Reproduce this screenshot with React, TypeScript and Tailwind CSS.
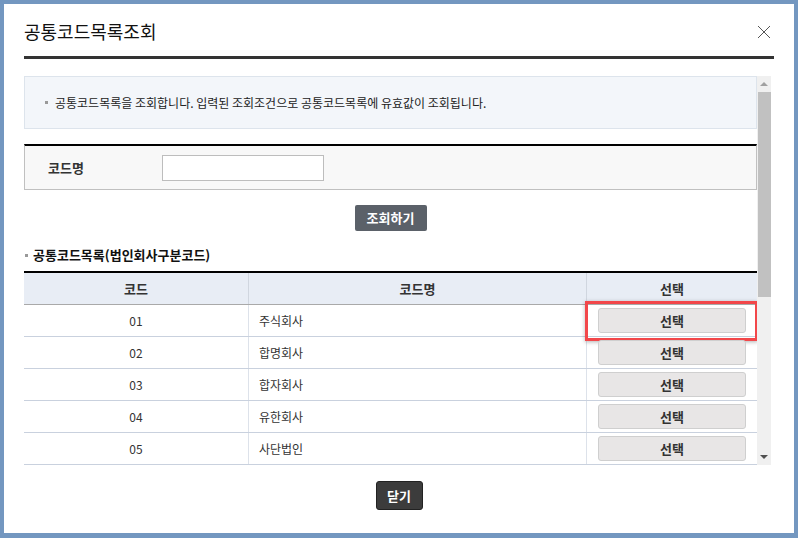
import React from "react";

const rows = [
  ["01", "주식회사"],
  ["02", "합명회사"],
  ["03", "합자회사"],
  ["04", "유한회사"],
  ["05", "사단법인"],
];

export default function App() {
  return (
    <div className="w-[798px] h-[538px] bg-[#7397c0] pt-[4px] pl-[4px] pr-[4px] pb-[5px]" style={{ fontFamily: '"Noto Sans CJK KR", "Noto Sans", sans-serif' }}>
      <div className="w-full h-full bg-white relative flex flex-col">
        <div className="flex items-center h-[55px] mx-[20px] border-b-[3px] border-[#333]">
          <div className="text-[18px] text-[#111] pt-[2px]">공통코드목록조회</div>
        </div>
        <div className="absolute right-[23px] top-[21px] text-[#555]">
          <svg width="14" height="14" viewBox="0 0 14 14"><path d="M1 1L13 13M13 1L1 13" stroke="#555" strokeWidth="1" /></svg>
        </div>
        <div className="mt-[17px] ml-[20px] flex h-[389px] w-[747px]">
          <div className="w-[733px] h-full overflow-hidden">
            <div className="h-[53px] bg-[#f3f6fa] border border-[#dde4ec] flex items-center pl-[20px] text-[12px] text-[#222]">
              <span className="w-[3px] h-[3px] bg-[#999] mr-[7px]" />
              공통코드목록을 조회합니다. 입력된 조회조건으로 공통코드목록에 유효값이 조회됩니다.
            </div>
            <div className="mt-[15px] h-[46px] bg-[#f8f8f8] border-t-2 border-t-black border-x border-b border-[#c0c0c0] flex items-center">
              <div className="w-[137px] pl-[23px] text-[13px] font-bold text-[#333]">코드명</div>
              <div className="w-[162px] h-[26px] bg-white border border-[#bdbdbd]" />
            </div>
            <div className="flex justify-center mt-[15px]">
              <div className="w-[72px] h-[26px] bg-[#5b6169] rounded-[2px] text-white text-[13px] font-bold flex items-center justify-center">조회하기</div>
            </div>
            <div className="mt-[14px] flex items-center h-[20px] text-[13px] font-bold text-[#111]">
              <span className="w-[3px] h-[3px] bg-[#999] mr-[5px] ml-[1px]" />
              공통코드목록(법인회사구분코드)
            </div>
            <div className="mt-[6px] border-t-2 border-black">
              <div className="flex h-[32px] bg-[#e8edf5] border-b border-[#a9a9a9] text-[13px] font-bold text-[#333]">
                <div className="w-[225px] flex items-center justify-center border-r border-[#d0d6df]">코드</div>
                <div className="w-[338px] flex items-center justify-center border-r border-[#d0d6df]">코드명</div>
                <div className="flex-1 flex items-center justify-center">선택</div>
              </div>
              {rows.map(([c, n], i) => (
                <div key={c} className="flex h-[32px] border-b border-[#c9d1de] text-[12px] text-[#333]">
                  <div className="w-[225px] flex items-center justify-center border-r border-[#dde2ea]">{c}</div>
                  <div className="w-[338px] flex items-center pl-[10px] border-r border-[#dde2ea]">{n}</div>
                  <div className="flex-1 flex items-center justify-center relative">
                    <div className="w-[148px] h-[25px] bg-[#e8e6e6] border border-[#cfcfcf] rounded-[3px] flex items-center justify-center text-[13px] font-bold text-[#333]">선택</div>
                    {i === 0 && <div className="absolute left-[-2px] right-[-1px] top-[-4px] bottom-[-5px] border-[3px] border-[#f2474a] shadow-[0_1px_4px_rgba(0,0,0,0.3)]" />}
                  </div>
                </div>
              ))}
              <div className="flex h-[32px]">
                <div className="w-[225px] border-r border-[#dde2ea]" />
                <div className="w-[338px] border-r border-[#dde2ea]" />
                <div className="flex-1 flex justify-center pt-[3px]">
                  <div className="w-[148px] h-[25px] bg-[#e8e6e6] border border-[#cfcfcf] rounded-[3px]" />
                </div>
              </div>
            </div>
          </div>
          <div className="w-[14px] h-full bg-[#f0f0f0] flex flex-col items-center">
            <div className="h-[16px] flex items-center"><div className="w-0 h-0 border-x-[4px] border-x-transparent border-b-[4px] border-b-[#a0a0a0]" /></div>
            <div className="w-[13px] h-[205px] bg-[#c1c1c1]" />
            <div className="flex-1" />
            <div className="h-[16px] flex items-center"><div className="w-0 h-0 border-x-[4px] border-x-transparent border-t-[4px] border-t-[#505050]" /></div>
          </div>
        </div>
        <div className="flex justify-center mt-[16px]">
          <div className="w-[47px] h-[29px] bg-[#3c3c3c] rounded-[3px] text-white text-[13px] font-bold flex items-center justify-center border border-[#222]">닫기</div>
        </div>
      </div>
    </div>
  );
}
